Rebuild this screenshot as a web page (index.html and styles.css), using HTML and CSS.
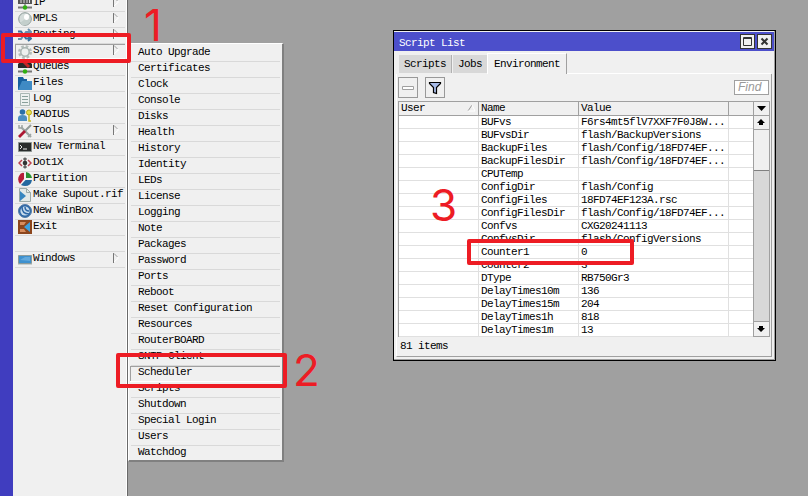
FILE: index.html
```
<!DOCTYPE html>
<html lang="en">
<head>
<meta charset="utf-8">
<title>WinBox</title>
<link rel="stylesheet" href="styles.css">
</head>
<body>
<svg class="defs"><symbol id="arrow" viewBox="0 0 6 10"><path d="M1 1l4.500 4L1 9" fill="none" stroke="#fff"/><path d="M.5 0v10" stroke="#777"/><path d="M1 .5l3.500 3.500" stroke="#999"/></symbol></svg>
<div class="desktop">
<div class="rail"></div>
<nav class="sidebar">
<div class="item"><svg viewBox="0 0 14 14"><rect x="0" y="0" width="14" height="8" fill="#555"/><path d="M3 2v5M6 2v5M9 2v5M11.500 2v5" stroke="#ddd"/><path d="M0 11.500h14" stroke="#777" stroke-width="2"/><path d="M7 8v3" stroke="#555"/><circle cx="7" cy="11.500" r="2.200" fill="#2fb010"/></svg><span>IP</span><svg class="arrow"><use href="#arrow"/></svg></div>
<div class="item"><svg viewBox="0 0 14 14"><circle cx="7" cy="7" r="6.300" fill="#d5dddb" stroke="#8c9b98"/><path d="M2 11L12 3v6q-2 5-8 4z" fill="#c4cfcc"/><ellipse cx="8.500" cy="5" rx="2.500" ry="3" fill="#fff"/></svg><span>MPLS</span><svg class="arrow"><use href="#arrow"/></svg></div>
<div class="item"><svg viewBox="0 0 14 14"><path d="M0 3.500h3l5 7h4M10 8l3 2.500L10 13" fill="none" stroke="#3a6f9c" stroke-width="2"/><path d="M0 11h3l5-7h4M10 1l3 3-3 3" fill="none" stroke="#6790af" stroke-width="2"/></svg><span>Routing</span><svg class="arrow"><use href="#arrow"/></svg></div>
<div class="item active"><svg viewBox="0 0 14 14"><circle cx="7" cy="7" r="5.700" fill="none" stroke="#b4bebb" stroke-width="2.600" stroke-dasharray="2.600 1.880"/><circle cx="7" cy="7" r="4.200" fill="#edf0ef" stroke="#a9b4b1" stroke-width="1.500"/></svg><span>System</span><svg class="arrow"><use href="#arrow"/></svg></div>
<div class="item"><svg viewBox="0 0 14 14"><path d="M0 8V4l3-3h8l3 3v4z" fill="#292929"/><path d="M4 0l7 7" stroke="#c52626" stroke-width="3"/><path d="M0 11.500h14" stroke="#777" stroke-width="2"/><circle cx="7" cy="11.500" r="2.200" fill="#2fb010"/></svg><span>Queues</span></div>
<div class="item"><svg viewBox="0 0 14 14"><path d="M0 1h5l1 2h3v11H0z" fill="#17609f"/><path d="M4 5h10v9H0z" fill="#3f8ac4"/></svg><span>Files</span></div>
<div class="item"><svg viewBox="0 0 14 14"><path d="M2.500 1.500h9v12h-9z" fill="#edf1f0" stroke="#a9b7b4"/><path d="M4 4.500h6M4 7.500h6M4 10.500h6" stroke="#89a09b"/></svg><span>Log</span></div>
<div class="item"><svg viewBox="0 0 14 14"><circle cx="4.500" cy="4" r="2.800" fill="#2b70a8"/><path d="M0 13V10q0-3 4.500-3T9 10v3z" fill="#4c8ec2"/><circle cx="11" cy="4.500" r="2.500" fill="#e7dd49" stroke="#b6a91b"/><path d="M11 6v7h2" fill="none" stroke="#c6b822" stroke-width="1.500"/></svg><span>RADIUS</span></div>
<div class="item"><svg viewBox="0 0 14 14"><path d="M3 3l10 10" stroke="#9da5a3" stroke-width="2.200"/><path d="M1 1v3h3V1M10 13l3-3" stroke="#9da5a3" stroke-width="1.500" fill="none"/><path d="M13 1L7 7" stroke="#929b99" stroke-width="2"/><path d="M7 7l-6 6" stroke="#ad1733" stroke-width="2.800"/></svg><span>Tools</span><svg class="arrow"><use href="#arrow"/></svg></div>
<div class="item"><svg viewBox="0 0 14 14"><path d="M.5 2.500h13v9H.5z" fill="#292c2c" stroke="#8b9290"/><path d="M2 5l2 2-2 2M5 9h4" fill="none" stroke="#e8e8e8"/></svg><span>New Terminal</span></div>
<div class="item"><svg viewBox="0 0 14 14"><path d="M4 4L1 7l3 3M10 4l3 3-3 3" fill="none" stroke="#ba4350" stroke-width="1.500"/><path d="M7 1.500v11M5 3h4M5 11h4" stroke="#444" stroke-width="1.200"/><circle cx="7" cy="7" r="2.300" fill="#333"/></svg><span>Dot1X</span></div>
<div class="item"><svg viewBox="0 0 14 14"><path d="M6 1v6L2 12Q-1 8 1 4t5-3z" fill="#b51e39"/><path d="M8 0q5 1 6 6H8z" fill="#299133"/><path d="M7.500 8H14q-1 6-7 6-2 0-4-1z" fill="#23689f"/></svg><span>Partition</span></div>
<div class="item"><svg viewBox="0 0 14 14"><path d="M1.500.5h7l4 4v9h-11z" fill="#e2e9e7" stroke="#9baaa7"/><path d="M8.500.5v4h4" fill="none" stroke="#9baaa7"/><path d="M2 3l6 5-6 5z" fill="#3686bf"/></svg><span>Make Supout.rif</span></div>
<div class="item"><svg viewBox="0 0 14 14"><circle cx="7" cy="7" r="6.500" fill="#2e68a6" stroke="#557da7"/><circle cx="7" cy="7" r="4.600" fill="#c7dced"/><path d="M4 3q0 7 7 7M7 3q0 4 4 4" fill="none" stroke="#2e68a6" stroke-width="1.500"/></svg><span>New WinBox</span></div>
<div class="item"><svg viewBox="0 0 14 14"><path d="M0 0h14v14H0z" fill="#8c461d"/><path d="M2 2h6L6 5H2zM2 12h6L6 9H2z" fill="#d78c5c"/><path d="M6 7l6-5v10z" fill="#3da0dd"/></svg><span>Exit</span></div>
<div class="item"></div>
<div class="item"><svg viewBox="0 0 14 14"><path d="M.5 3.500h13v8H.5z" fill="#3e91cf" stroke="#8d9b9b"/><path d="M0 12.500h14" stroke="#cad0cf"/><path d="M2 8l5-3h5v4z" fill="#63a9dd"/></svg><span>Windows</span><svg class="arrow"><use href="#arrow"/></svg></div>
</nav>

<div class="submenu">
<div class="entry">Auto Upgrade</div><div class="entry">Certificates</div><div class="entry">Clock</div><div class="entry">Console</div><div class="entry">Disks</div><div class="entry">Health</div><div class="entry">History</div><div class="entry">Identity</div><div class="entry">LEDs</div><div class="entry">License</div><div class="entry">Logging</div><div class="entry">Note</div><div class="entry">Packages</div><div class="entry">Password</div><div class="entry">Ports</div><div class="entry">Reboot</div><div class="entry">Reset Configuration</div><div class="entry">Resources</div><div class="entry">RouterBOARD</div><div class="entry">SNTP Client</div><div class="entry chosen">Scheduler</div><div class="entry">Scripts</div><div class="entry">Shutdown</div><div class="entry">Special Login</div><div class="entry">Users</div><div class="entry">Watchdog</div>
</div>

<section class="window">
<header class="title"><span>Script List</span>
<button class="ctl"><svg viewBox="0 0 13 13"><path d="M2.500 2.500h8v8h-8zM2 3.500h9" fill="none" stroke="#333"/></svg></button>
<button class="ctl"><svg viewBox="0 0 13 13"><path d="M3.500 3.500l6 6M9.500 3.500l-6 6" stroke="#333" stroke-width="2"/></svg></button>
</header>
<div class="tabs"><div class="tab">Scripts</div><div class="tab jobs">Jobs</div><div class="tab current">Environment</div><div class="tabline"></div></div>
<div class="content">
<div class="toolbar">
<button class="tool"><svg viewBox="0 0 18 19"><path d="M3.500 8.500h11v3h-11z" fill="#fff" stroke="#a0a0a0"/></svg></button>
<button class="tool"><svg viewBox="0 0 18 19"><path d="M3.500 4.500h11v1l-4 4v6l-3-1v-5l-4-4z" fill="#a8bce8" stroke="#000" stroke-width="1.200"/></svg></button>
<div class="find">Find</div>
</div>
<div class="grid">
<div class="table">
<div class="row head"><div>User<svg class="sort" viewBox="0 0 9 8"><path d="M1 7l4-6" stroke="#999"/><path d="M5 1l3 6H1" fill="none" stroke="#fff"/></svg></div><div>Name</div><div>Value</div><div></div></div>
<div class="row"><div></div><div>BUFvs</div><div>F6rs4mt5flV7XXF7F0J8W...</div><div></div></div>
<div class="row"><div></div><div>BUFvsDir</div><div>flash/BackupVersions</div><div></div></div>
<div class="row"><div></div><div>BackupFiles</div><div>flash/Config/18FD74EF...</div><div></div></div>
<div class="row"><div></div><div>BackupFilesDir</div><div>flash/Config/18FD74EF...</div><div></div></div>
<div class="row"><div></div><div>CPUTemp</div><div></div><div></div></div>
<div class="row"><div></div><div>ConfigDir</div><div>flash/Config</div><div></div></div>
<div class="row"><div></div><div>ConfigFiles</div><div>18FD74EF123A.rsc</div><div></div></div>
<div class="row"><div></div><div>ConfigFilesDir</div><div>flash/Config/18FD74EF...</div><div></div></div>
<div class="row"><div></div><div>Confvs</div><div>CXG20241113</div><div></div></div>
<div class="row"><div></div><div>ConfvsDir</div><div>flash/ConfigVersions</div><div></div></div>
<div class="row"><div></div><div>Counter1</div><div>0</div><div></div></div>
<div class="row"><div></div><div>Counter2</div><div>3</div><div></div></div>
<div class="row"><div></div><div>DType</div><div>RB750Gr3</div><div></div></div>
<div class="row"><div></div><div>DelayTimes10m</div><div>136</div><div></div></div>
<div class="row"><div></div><div>DelayTimes15m</div><div>204</div><div></div></div>
<div class="row"><div></div><div>DelayTimes1h</div><div>818</div><div></div></div>
<div class="row"><div></div><div>DelayTimes1m</div><div>13</div><div></div></div>
</div>
<div class="scroll">
<div class="pick"><svg viewBox="0 0 14 13"><path d="M3 4h9L7.500 9z"/></svg></div>
<div class="step"><svg viewBox="0 0 14 13"><path d="M7 3l4 4H9v2H5V7H3z"/></svg></div>
<div class="thumb"></div><div class="track"></div>
<div class="step"><svg viewBox="0 0 14 13"><path d="M7 10l4-4H9V4H5v2H3z"/></svg></div>
</div>
</div>
<footer class="status">81 items</footer>
</div>
</section>

<div class="mark box-system"></div><div class="mark box-scheduler"></div><div class="mark box-counter"></div>
<div class="num n1">1</div><div class="num n2">2</div><div class="num n3">3</div>
</div>
</body>
</html>
```
FILE: styles.css
```
* { box-sizing: border-box; }
body { margin: 0; }
svg { display: block; flex: none; }
.defs { position: absolute; width: 0; height: 0; }
button { padding: 0; margin: 0; }
.desktop { position: relative; width: 808px; height: 496px; overflow: hidden; background: #a0a0a0; display: flex; font: 11px/13px "Liberation Mono", monospace; letter-spacing: -0.6px; color: #000; white-space: nowrap; }
.rail { width: 13px; background: #403dbf; }
.sidebar { width: 115px; background: #f0f0f0; border-right: 1px solid #696969; box-shadow: inset -1px 0 #fff; padding: 0 2px 0 2px; margin-top: -4px; }
.item { height: 16px; display: flex; border-bottom: 1px solid #d9d9d9; padding-left: 3px; }
.item svg { width: 14px; height: 14px; margin: 0 1px 0 0; }
.item svg.arrow { width: 6px; height: 10px; margin: 1px 6px 0 auto; }
.item.active { box-shadow: inset 1px 1px #a0a0a0, inset 0 -1px #fff; }
.item.active svg { margin-top: 1px; }
.submenu { position: absolute; left: 128px; top: 43px; width: 156px; height: 419px; background: #f0f0f0; border: 1px solid #fff; border-right: 2px solid #808080; border-bottom: 2px solid #808080; padding: 2px 2px 0 1px; }
.entry { height: 16px; border-bottom: 1px solid #d9d9d9; margin-left: 1px; padding-left: 7px; }
.entry:last-child { border: 0; height: 14px; }
.entry.chosen { margin-left: 0; padding-left: 8px; box-shadow: inset 1px 1px #a0a0a0; border-bottom-color: #fff; }
.window { position: absolute; left: 393px; top: 30px; width: 383px; height: 331px; background: #f0f0f0; border: 1px solid #000; display: flex; flex-direction: column; padding: 1px 1px 0 1px; box-shadow: inset -1px -1px #a0a0a0; }
.title { height: 19px; background: #4c4fcb; color: #fff; display: flex; align-items: flex-start; padding: 2px 2px 0 5px; margin: 0 0 0 -1px; gap: 2px; }
.title span { margin: 3px auto 0 0; }
.ctl { width: 15px; height: 15px; border: 1px solid #333; background: #f0f0f0; }
.tabs { height: 23px; display: flex; align-items: flex-end; padding: 0 3px 0 4px; }
.tab { height: 18px; width: 53px; background: #d8d8d8; padding: 3px 0 0 5px; margin-bottom: 1px; border-right: 1px solid #b0b0b0; }
.tab.jobs { width: 34px; margin-left: 1px; border: 0; }
.tab.current { width: 80px; height: 21px; margin-bottom: 0; background: #f0f0f0; border: 1px solid #fff; border-bottom: 0; border-right-color: #a0a0a0; padding-top: 4px; padding-left: 6px; }
.tabline { flex: 1; height: 1px; background: #fff; }
.content { flex: 1; margin: 0 2px 3px 1px; padding: 3px 1px 0 1px; border: 1px solid #a0a0a0; border-left-color: #fff; border-top: 0; display: flex; flex-direction: column; }
.toolbar { height: 24px; display: flex; align-items: flex-start; gap: 7px; }
.tool { width: 20px; height: 21px; border: 1px solid #999; background: #f0f0f0; }
.find { margin: 3px 1px 0 auto; width: 35px; height: 15px; border: 1px solid #a0a0a0; background: #fff; color: #999; font: italic 12px/13px "Liberation Sans", sans-serif; letter-spacing: 0; padding-left: 3px; }
.grid { height: 236px; border: 1px solid #a0a0a0; display: flex; background: #fff; }
.table { flex: 1; }
.row { display: grid; grid-template-columns: 80px 100px 150px 1fr; height: 13px; border-bottom: 1px solid #e0e0e0; line-height: 12px; }
.row > div { border-right: 1px solid #e0e0e0; padding-left: 2px; }
.row > div:last-child { border: 0; }
.row.head { height: 14px; background: #f0f0f0; border-color: #a0a0a0; line-height: 13px; }
.head > div { border-color: #a0a0a0; display: flex; }
.sort { width: 9px; height: 8px; margin: 2px 2px 0 auto; }
.scroll { width: 16px; border-left: 1px solid #a0a0a0; display: flex; flex-direction: column; background: #d8d8d8; }
.pick, .step { height: 14px; background: #f0f0f0; border-bottom: 1px solid #a0a0a0; }
.pick svg, .step svg { width: 14px; height: 13px; }
.step:last-child { border: 0; }
.thumb { height: 41px; background: #f0f0f0; border-bottom: 1px solid #808080; }
.track { flex: 1; border-bottom: 1px solid #a0a0a0; }
.status { padding: 3px 0 0 2px; }
.mark { position: absolute; border: 4px solid #ed1c24; border-radius: 2px; }
.box-system { left: 1px; top: 33px; width: 130px; height: 30px; }
.box-scheduler { left: 116px; top: 353px; width: 171px; height: 35px; }
.box-counter { left: 467px; top: 239px; width: 167px; height: 26px; }
.num { position: absolute; font: 44px/44px Inter, sans-serif; letter-spacing: 0; color: #ed1c24; }
.n1 { left: 144px; top: 3px; }
.n2 { left: 293px; top: 348px; }
.n3 { left: 430px; top: 183px; }
```
